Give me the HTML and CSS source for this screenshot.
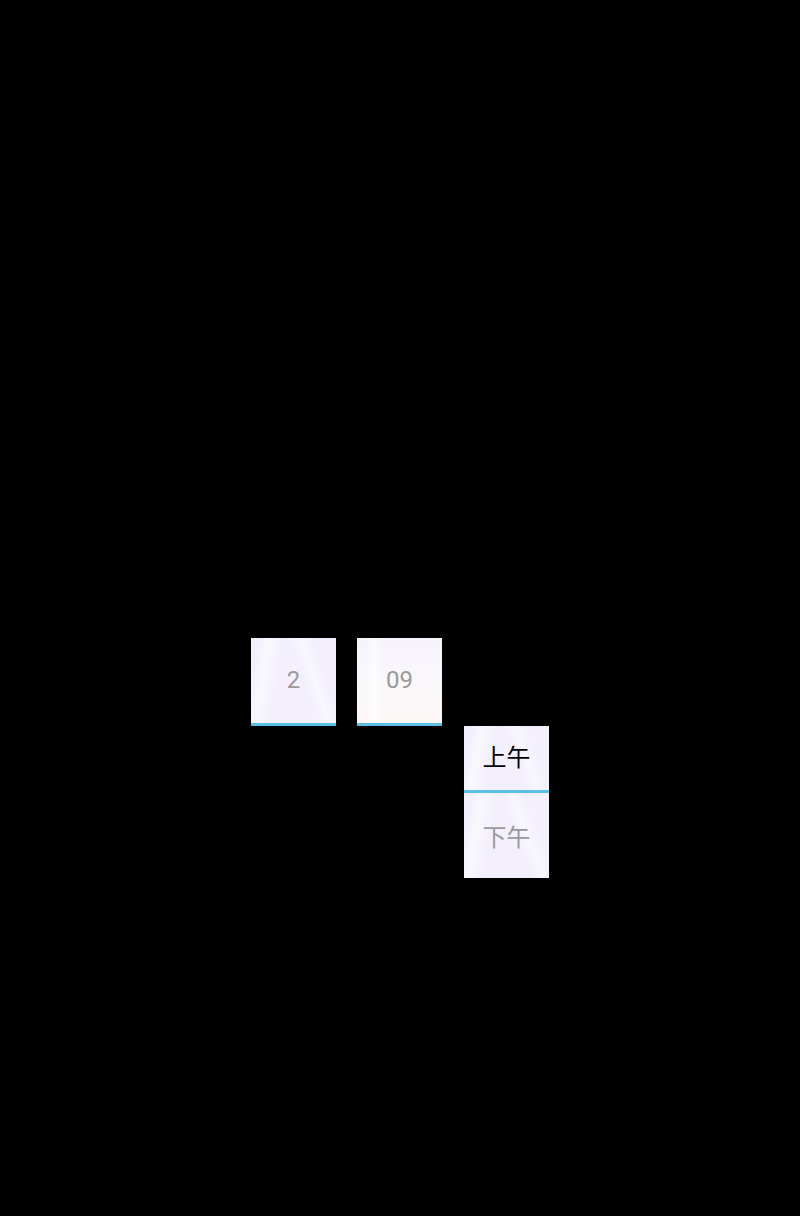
FILE: index.html
```html
<!DOCTYPE html>
<html lang="zh">
<head>
<meta charset="utf-8">
<link rel="stylesheet" href="styles.css">
</head>
<body>
<div class="picker">
  <div class="col">
    <div class="cell cell-sel"><span class="val dim">2</span></div>
  </div>
  <div class="col">
    <div class="cell cell-sel warm"><span class="val dim">09</span></div>
  </div>
  <div class="col col-ampm">
    <div class="cell ampm-top"><span class="val">上午</span></div>
    <div class="divider"></div>
    <div class="cell ampm-bottom"><span class="val dim">下午</span></div>
  </div>
</div>
</body>
</html>
```
FILE: styles.css
```css
html, body {
  margin: 0;
  padding: 0;
  background: #000;
  width: 800px;
  height: 1216px;
  overflow: hidden;
  font-family: Roboto, "Noto Sans CJK SC", sans-serif;
}
.picker {
  display: flex;
  align-items: flex-start;
  gap: 21px;
  padding: 638px 0 0 251px;
}
.col {
  width: 85px;
  display: flex;
  flex-direction: column;
}
.col-ampm {
  margin-top: 88px;
  margin-left: 1px;
}
.cell {
  display: flex;
  align-items: center;
  justify-content: center;
  background:
    linear-gradient(100deg, rgba(255,255,255,0) 8%, rgba(255,255,255,0.55) 18%, rgba(255,255,255,0) 34%),
    linear-gradient(70deg, rgba(255,255,255,0) 58%, rgba(255,255,255,0.45) 68%, rgba(255,255,255,0) 80%),
    #f3effd;
}
.cell-sel {
  height: 84px;
  border-bottom: 3px solid #5bc0e6;
  padding-bottom: 1px;
  box-sizing: content-box;
}
.warm {
  background:
    linear-gradient(90deg, rgba(255,255,255,0) 10%, rgba(255,255,255,0.7) 20%, rgba(255,255,255,0) 30%),
    linear-gradient(180deg, #f6f3fd 0%, #fbf8fb 60%, #fdf8f6 100%);
}
.val {
  font-size: 24px;
  color: #000;
  line-height: 1;
}
.dim {
  color: #9a9a9a;
}
.ampm-top {
  height: 64px;
}
.divider {
  height: 3px;
  background: #5bc0e6;
}
.ampm-bottom {
  height: 85px;
  padding-top: 5px;
  box-sizing: border-box;
}
```
